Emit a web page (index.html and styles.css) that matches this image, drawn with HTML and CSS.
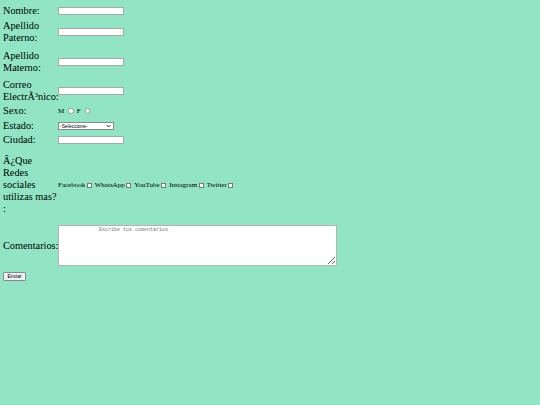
FILE: index.html
```html
<!DOCTYPE html>
<html>
<head>
<meta charset="utf-8">
<link rel="stylesheet" href="styles.css">
</head>
<body>
<form class="form">
  <div class="row r1">
    <label class="lbl">Nombre:</label>
    <input class="txt" type="text">
  </div>
  <div class="row r2">
    <label class="lbl">Apellido Paterno:</label>
    <input class="txt" type="text">
  </div>
  <div class="row r3">
    <label class="lbl">Apellido Materno:</label>
    <input class="txt" type="text">
  </div>
  <div class="row r4">
    <label class="lbl">Correo ElectrÃ³nico:</label>
    <input class="txt" type="text">
  </div>
  <div class="row r5">
    <label class="lbl">Sexo:</label>
    <div class="opts">
      <span class="opt">M</span><input class="radio" type="radio" name="s">
      <span class="opt">F</span><input class="radio" type="radio" name="s">
    </div>
  </div>
  <div class="row r6">
    <label class="lbl">Estado:</label>
    <div class="sel">-Seleccione-<svg class="caret" viewBox="0 0 8 5" width="5" height="4"><path d="M1 1 L4 4 L7 1" fill="none" stroke="#222" stroke-width="1.6"/></svg></div>
  </div>
  <div class="row r7">
    <label class="lbl">Ciudad:</label>
    <input class="txt" type="text">
  </div>
  <div class="row r8">
    <label class="lbl">Â¿Que Redes sociales utilizas mas? :</label>
    <div class="opts">
      <span class="opt">Facebook</span><input class="chk" type="checkbox">
      <span class="opt">WhatsApp</span><input class="chk" type="checkbox">
      <span class="opt">YouTube</span><input class="chk" type="checkbox">
      <span class="opt">Instagram</span><input class="chk" type="checkbox">
      <span class="opt">Twitter</span><input class="chk" type="checkbox">
    </div>
  </div>
  <div class="row r9">
    <label class="lbl">Comentarios:</label>
    <textarea class="area" placeholder="Escribe tus comentarios"></textarea>
  </div>
  <div class="submit-row">
    <button class="btn" type="button">Enviar</button>
  </div>
</form>
</body>
</html>
```
FILE: styles.css
```css
html, body {
  margin: 0;
  padding: 0;
}
body {
  background: #91e5c5;
  font-family: "Liberation Serif", "Times New Roman", serif;
  color: #000;
}
.form {
  padding: 5px 0 0 3px;
  display: flex;
  flex-direction: column;
}
.row {
  display: grid;
  grid-template-columns: 55px auto;
  align-items: center;
  justify-items: start;
}
.lbl {
  font-size: 10.3px;
  line-height: 12px;
}
.r2 { margin-top: 3px; }
.r3 { margin-top: 6px; }
.r4 { margin-top: 5px; }
.r5 { margin-top: 2px; }
.r6 { margin-top: 3px; }
.r7 { margin-top: 2px; }
.r8 { margin-top: 9px; }
.r9 { margin-top: 10px; }
.r9 .lbl { white-space: nowrap; }
.txt {
  box-sizing: border-box;
  width: 66px;
  height: 8px;
  margin: 0;
  padding: 0;
  border: 1px solid #a8a8a8;
  background: #fff;
  appearance: none;
}
.opts {
  display: flex;
  align-items: center;
  font-size: 7px;
  line-height: 8px;
}
.radio {
  appearance: none;
  box-sizing: border-box;
  width: 5.5px;
  height: 5.5px;
  margin: 0 3px 0 4px;
  border: 1px solid #9a9a9a;
  border-radius: 50%;
  background: #fff;
}
.chk {
  appearance: none;
  box-sizing: border-box;
  width: 5px;
  height: 5px;
  margin: 0 3px 0 1.5px;
  border: 1px solid #7a7a7a;
  background: #fff;
}
.sel {
  box-sizing: border-box;
  width: 56px;
  height: 8px;
  border: 1px solid #8a8a8a;
  background: #fff;
  font-family: "Liberation Sans", Arial, sans-serif;
  font-size: 5px;
  line-height: 6px;
  padding-left: 1px;
  display: flex;
  align-items: center;
  justify-content: space-between;
}
.caret {
  margin-right: 2px;
}
.area {
  box-sizing: border-box;
  width: 279px;
  height: 41px;
  margin: 0;
  padding: 1px 2px 0 40px;
  border: 1px solid #b4b4b4;
  background: #fff;
  font-family: "Liberation Mono", "Courier New", monospace;
  font-size: 5px;
  line-height: 6px;
  resize: both;
}
.area::placeholder {
  color: #777;
}
.submit-row {
  margin-top: 6px;
  display: flex;
}
.btn {
  box-sizing: border-box;
  width: 23px;
  height: 9px;
  margin: 0;
  padding: 0;
  border: 1px solid #8a8a8a;
  border-radius: 1px;
  background: #efefef;
  font-family: "Liberation Sans", Arial, sans-serif;
  font-size: 5px;
  line-height: 7px;
  color: #000;
}
```
